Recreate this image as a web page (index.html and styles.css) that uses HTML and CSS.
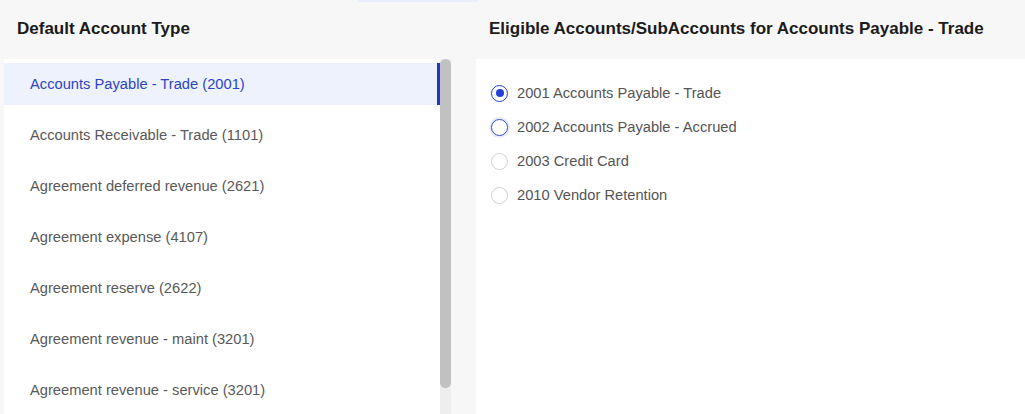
FILE: index.html
```html
<!DOCTYPE html>
<html lang="en">
<head>
  <meta charset="UTF-8" />
  <title>Default Account Type</title>
  <link rel="stylesheet" href="styles.css">
</head>
<body>
  <div class="tabline"></div>
  <div class="layout">
    <div class="column left">
      <h2 class="column-title">Default Account Type</h2>
      <div class="list-wrap">
        <div class="account-list">
          <div class="account selected">Accounts Payable - Trade (2001)</div>
          <div class="account">Accounts Receivable - Trade (1101)</div>
          <div class="account">Agreement deferred revenue (2621)</div>
          <div class="account">Agreement expense (4107)</div>
          <div class="account">Agreement reserve (2622)</div>
          <div class="account">Agreement revenue - maint (3201)</div>
          <div class="account">Agreement revenue - service (3201)</div>
        </div>
        <div class="scrollbar"><div class="thumb"></div></div>
      </div>
    </div>

    <div class="column right">
      <h2 class="column-title">Eligible Accounts/SubAccounts for Accounts Payable - Trade</h2>
      <div class="eligible-panel">
        <label class="option"><span class="radio checked"></span>2001 Accounts Payable - Trade</label>
        <label class="option"><span class="radio focus"></span>2002 Accounts Payable - Accrued</label>
        <label class="option"><span class="radio"></span>2003 Credit Card</label>
        <label class="option"><span class="radio"></span>2010 Vendor Retention</label>
      </div>
    </div>
  </div>
</body>
</html>
```

FILE: styles.css
```css
html, body {
  height: 100%;
}
body {
  font-family: "Liberation Sans", Arial, sans-serif;
  background-color: #f7f7f7;
  color: #555;
  margin: 0;
  padding: 0;
  overflow: hidden;
}
.tabline {
  width: 120px;
  height: 2px;
  margin-left: 358px;
  background-color: #eaedfb;
}
.layout {
  display: flex;
  gap: 25px;
  padding-left: 4px;
  height: calc(100% - 2px);
}
.column {
  display: flex;
  flex-direction: column;
  min-height: 0;
}
.column.left {
  width: 447px;
}
.column.right {
  flex: 1;
}
.column-title {
  margin: 0;
  height: 57px;
  line-height: 54px;
  padding-left: 13px;
  font-size: 17px;
  font-weight: bold;
  color: #1b1b1b;
  white-space: nowrap;
}
.list-wrap {
  flex: 1;
  min-height: 0;
  display: flex;
}
.account-list {
  flex: 1;
  overflow: hidden;
  background: white;
  padding-top: 4px;
}
.scrollbar {
  width: 11px;
  background-color: #eeeeee;
}
.thumb {
  height: 329px;
  background-color: #c1c1c1;
  border-radius: 6px;
}
.account {
  height: 42px;
  line-height: 42px;
  margin-bottom: 9px;
  padding-left: 26px;
  font-size: 14.7px;
  color: #595959;
  white-space: nowrap;
}
.account.selected {
  background-color: #edf2fd;
  color: #2f44c2;
  box-shadow: inset -3px 0 0 #2236c9;
}
.eligible-panel {
  flex: 1;
  background: white;
  padding-top: 17px;
}
.option {
  display: flex;
  align-items: center;
  height: 34px;
  padding-left: 15px;
  gap: 9px;
  font-size: 14.7px;
  color: #555;
}
.radio {
  width: 15px;
  height: 15px;
  border: 1px solid #cfcfcf;
  border-radius: 50%;
  box-sizing: content-box;
  display: flex;
  align-items: center;
  justify-content: center;
  background: white;
}
.radio.checked {
  border-color: #2443d0;
}
.radio.checked::after {
  content: "";
  width: 8px;
  height: 8px;
  border-radius: 50%;
  background-color: #1f3fd6;
}
.radio.focus {
  border-color: #3b4cc0;
  box-shadow: 0 0 0 2px #e6ebfb;
}
```
